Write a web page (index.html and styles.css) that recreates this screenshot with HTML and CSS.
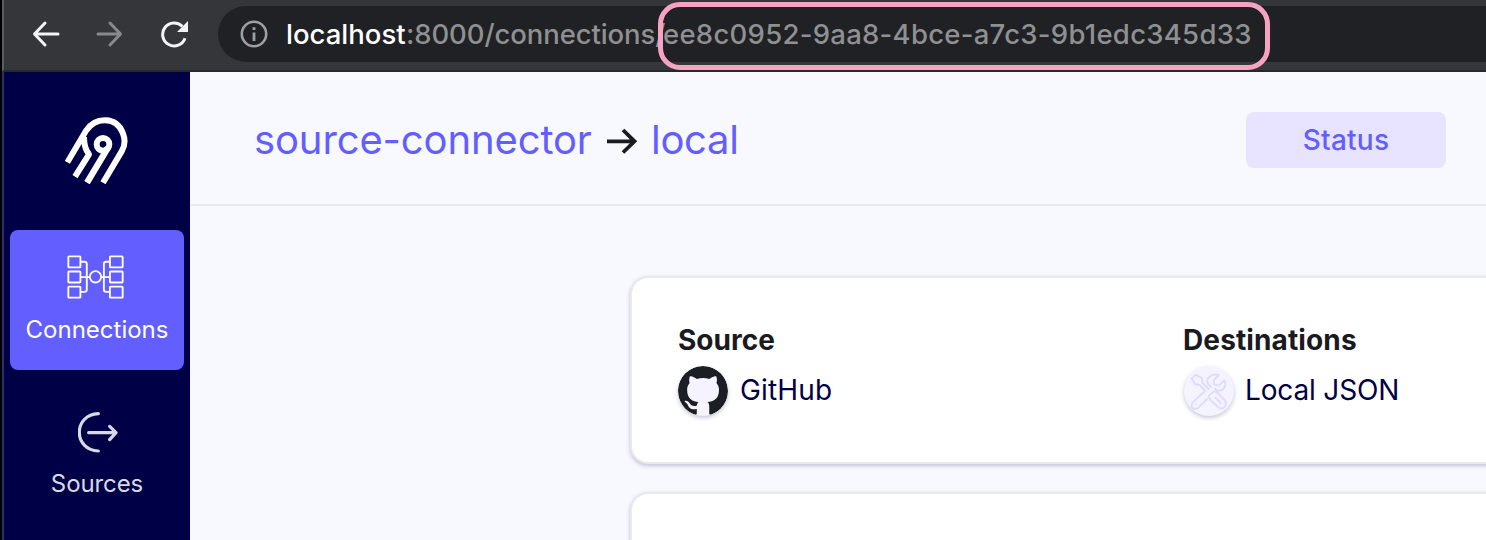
FILE: index.html
```html
<!DOCTYPE html>
<html lang="en">
<head>
<meta charset="utf-8">
<title>Connection</title>
<link rel="stylesheet" href="styles.css">
</head>
<body>
<div class="window">
  <header class="toolbar">
    <svg class="nav-icon" viewBox="0 0 28 28"><path d="M13 3 2.500 14 13 25M3 14H26" fill="none" stroke="#f3f4f5" stroke-width="3" stroke-linecap="round" stroke-linejoin="round"/></svg>
    <svg class="nav-icon forward" viewBox="0 0 28 28"><path d="M14 3 24.500 14 14 25M24 14H2" fill="none" stroke="#88898b" stroke-width="3" stroke-linecap="round" stroke-linejoin="round"/></svg>
    <svg class="nav-icon reload" viewBox="0 0 28 28"><path d="M22.400 6.400A11.500 11.500 0 1 0 25 18.200" fill="none" stroke="#f3f4f5" stroke-width="3"/><path d="M28 1V12H17Z" fill="#f3f4f5"/></svg>
    <div class="address">
      <svg class="info" viewBox="0 0 28 28"><circle cx="14" cy="14" r="12.200" fill="none" stroke="#9aa0a6" stroke-width="2.600"/><path d="M12.600 12.500h2.800V21h-2.800zM12.600 7.300h2.800v2.800h-2.800z" fill="#9aa0a6"/></svg>
      <span class="host">localhost</span><span class="path">:8000/connections/</span><span class="uuid">ee8c0952-9aa8-4bce-a7c3-9b1edc345d33</span>
    </div>
    <div class="highlight"></div>
  </header>
  <div class="app">
    <nav class="sidebar">
      <svg class="logo" viewBox="45 36 192 201"><g fill="none" stroke="#fff" stroke-width="18" stroke-linejoin="round"><path d="M52 172 109 76C138 34 199 35 218 83C227 105 223 126 215 139L159 233"/><path d="M102 96C102 118 108 137 117 148L75 215"/><circle cx="159" cy="118" r="19"/><path d="M111 233 174 128" stroke-width="19"/></g></svg>
      <a class="item active">
        <svg class="connections" viewBox="203 107 170 131"><g fill="none" stroke="#fff" stroke-width="5.500"><rect x="207" y="111" width="36" height="33" rx="2"/><rect x="207" y="156" width="36" height="33" rx="2"/><rect x="207" y="201" width="36" height="33" rx="2"/><rect x="331" y="111" width="38" height="33" rx="2"/><rect x="331" y="156" width="38" height="33" rx="2"/><rect x="331" y="201" width="38" height="33" rx="2"/><circle cx="288" cy="172" r="17"/><path d="M243 127h12q7 0 7 7v76q0 7-7 7h-12M331 127h-11q-7 0-7 7v76q0 7 7 7h11M243 173h28M305 173h26"/></g></svg>
        <span class="label connections-label">Connections</span>
      </a>
      <a class="item sources">
        <svg class="sources-icon" viewBox="84 36 120 123"><path d="M145 41C109 42 88 68 88 97S109 152 145 153M116 98H197M179 79 198 98 179 119" fill="none" stroke="#d9d9e5" stroke-width="9.500" stroke-linecap="round" stroke-linejoin="round"/></svg>
        <span class="label sources-label">Sources</span>
      </a>
    </nav>
    <main class="content">
      <div class="heading">
        <h1 class="title"><span class="from">source-connector</span><svg class="arrow" viewBox="0 0 30 26"><path d="M0 13.300H27M16 2 27.500 13.300 16 24.500" fill="none" stroke="#1a1a21" stroke-width="3.800"/></svg><span class="to">local</span></h1>
        <button class="status">Status</button>
      </div>
      <section class="card">
        <div class="endpoint">
          <h2 class="caption source-caption">Source</h2>
          <div class="connector">
            <svg class="badge" viewBox="0 0 16 16"><path fill="#1b1f23" d="M8 0C3.580 0 0 3.580 0 8c0 3.540 2.290 6.530 5.470 7.590.4.070.55-.17.55-.38 0-.19-.01-.82-.01-1.490-2.010.37-2.530-.49-2.690-.94-.09-.23-.48-.94-.82-1.130-.28-.15-.68-.52-.01-.53.63-.01 1.080.58 1.230.82.72 1.210 1.870.87 2.330.66.07-.52.28-.87.51-1.070-1.780-.2-3.640-.89-3.640-3.950 0-.87.31-1.590.82-2.150-.08-.2-.36-1.020.08-2.120 0 0 .67-.21 2.200.82.64-.18 1.320-.27 2-.27s1.360.09 2 .27c1.530-1.040 2.200-.82 2.200-.82.44 1.100.16 1.920.08 2.120.51.56.82 1.270.82 2.150 0 3.070-1.870 3.750-3.650 3.950.29.25.54.73.54 1.480 0 1.070-.01 1.930-.01 2.200 0 .21.15.46.55.38A8.010 8.010 0 0 0 16 8c0-4.420-3.580-8-8-8z"/></svg>
            <span class="name github">GitHub</span>
          </div>
        </div>
        <div class="endpoint">
          <h2 class="caption destination-caption">Destinations</h2>
          <div class="connector">
            <svg class="badge tools" viewBox="0 0 150 150"><g fill="none" stroke="#dedbff" stroke-width="5.500" stroke-linejoin="round" stroke-linecap="round"><path d="M23 37 35 26 53 36 56 51 74 69M23 37 33 54 47 57 64 75"/><path d="M75 89 89 77Q95 75 101 81L122 103C134 117 116 135 102 123L79 101Q73 95 75 89ZM94 95 110 111"/><path d="M60 78 27 108C16 121 30 138 44 124L69 99"/><path d="M81 63 72 54C64 37 81 22 104 27L89 43 91 55 104 59 121 43C130 61 115 79 98 73L93 68"/></g><circle cx="36" cy="115" r="2.500" fill="#dedbff"/></svg>
            <span class="name local-json">Local JSON</span>
          </div>
        </div>
      </section>
      <section class="card next"></section>
    </main>
  </div>
</div>
</body>
</html>
```
FILE: styles.css
```css
* { box-sizing: border-box; }
body { margin: 0; font-family: Inter, "Liberation Sans", sans-serif; }
.window { width: 1486px; height: 540px; overflow: hidden; display: flex; flex-direction: column; border-left: 2px solid #000; }
.toolbar { height: 72px; flex: none; position: relative; display: flex; align-items: flex-start; background: #35363a; border-left: 2px solid #5b5b5f; border-bottom: 2px solid #282828; }
.nav-icon { width: 28px; height: 28px; margin: 20px 0 0 28px; flex: none; }
.forward { margin-left: 36px; }
.reload { margin-left: 36px; }
.address { margin: 6px 0 0 30px; flex: 1; height: 56px; display: flex; align-items: center; background: #202124; border-radius: 28px 0 0 28px; padding-left: 22px; font-size: 27.500px; font-weight: 500; line-height: 57px; color: #8f9092; white-space: nowrap; }
.info { width: 28px; height: 28px; margin-right: 18px; flex: none; }
.host { color: #fff; width: 120px; }
.path { width: 257px; letter-spacing: -.1px; }
.uuid { letter-spacing: .27px; }
.highlight { position: absolute; left: 654px; top: 2px; width: 612px; height: 68px; border: 5px solid #f5a3c0; border-radius: 22px; }
.app { flex: 1; display: flex; min-height: 0; }
.sidebar { width: 188px; flex: none; background: #000046; border-left: 2px solid #312d68; display: flex; flex-direction: column; align-items: center; padding: 45px 6px 0; }
.logo { width: 64px; height: 67px; flex: none; margin-right: 1px; }
.item { width: 174px; height: 140px; flex: none; display: flex; flex-direction: column; align-items: center; border-radius: 8px; color: #d9d9e5; }
.active { margin-top: 46px; background: #625eff; color: #fff; padding-top: 25px; }
.connections { width: 57px; height: 44px; margin-right: 3px; }
.label { font-size: 24px; font-weight: 400; line-height: 30px; white-space: nowrap; }
.connections-label { margin-top: 16px; }
.sources { padding-top: 42px; }
.sources-icon { width: 40px; height: 41px; margin-left: 2px; }
.sources-label { margin-top: 16px; letter-spacing: -.1px; }
.content { flex: 1; background: #f8f9ff; min-width: 0; }
.heading { height: 134px; border-bottom: 2px solid #e8e8ed; display: flex; justify-content: space-between; align-items: flex-start; padding: 40px 40px 0 64px; }
.title { margin: 0; display: flex; align-items: center; height: 56px; font-size: 40px; font-weight: 400; line-height: 54px; color: #625eff; white-space: nowrap; letter-spacing: -.12px; }
.from { width: 337px; }
.arrow { width: 30px; height: 26px; margin: 2px 14px 0 16px; }
.to { letter-spacing: -.3px; }
.status { width: 200px; height: 56px; padding: 0; border: 0; border-radius: 8px; background: #e8e4ff; color: #625eff; font: 500 28px/56px Inter, sans-serif; letter-spacing: .25px; }
.card { margin: 70px 0 0 440px; width: 1010px; height: 188px; display: flex; background: #fff; border: 2px solid #e8e8ef; border-radius: 18px; padding: 45px 46px; box-shadow: 0 2px 4px rgba(26, 25, 77, .24); }
.next { margin-top: 28px; }
.endpoint { width: 505px; flex: none; }
.caption { margin: 0; font-size: 28px; line-height: 34px; font-weight: 700; color: #1a1a21; }
.destination-caption { letter-spacing: .12px; }
.connector { margin-top: 9px; display: flex; align-items: center; }
.badge { width: 50px; height: 50px; border-radius: 50%; background: #f4f3ff; box-shadow: 0 2px 4px rgba(26, 25, 77, .24); }
.tools { margin-left: 1px; margin-right: -1px; }
.name { margin: -2px 0 0 12px; font-size: 28px; font-weight: 400; color: #000046; white-space: nowrap; }
.github { letter-spacing: .15px; }
.local-json { letter-spacing: -.15px; }
```
